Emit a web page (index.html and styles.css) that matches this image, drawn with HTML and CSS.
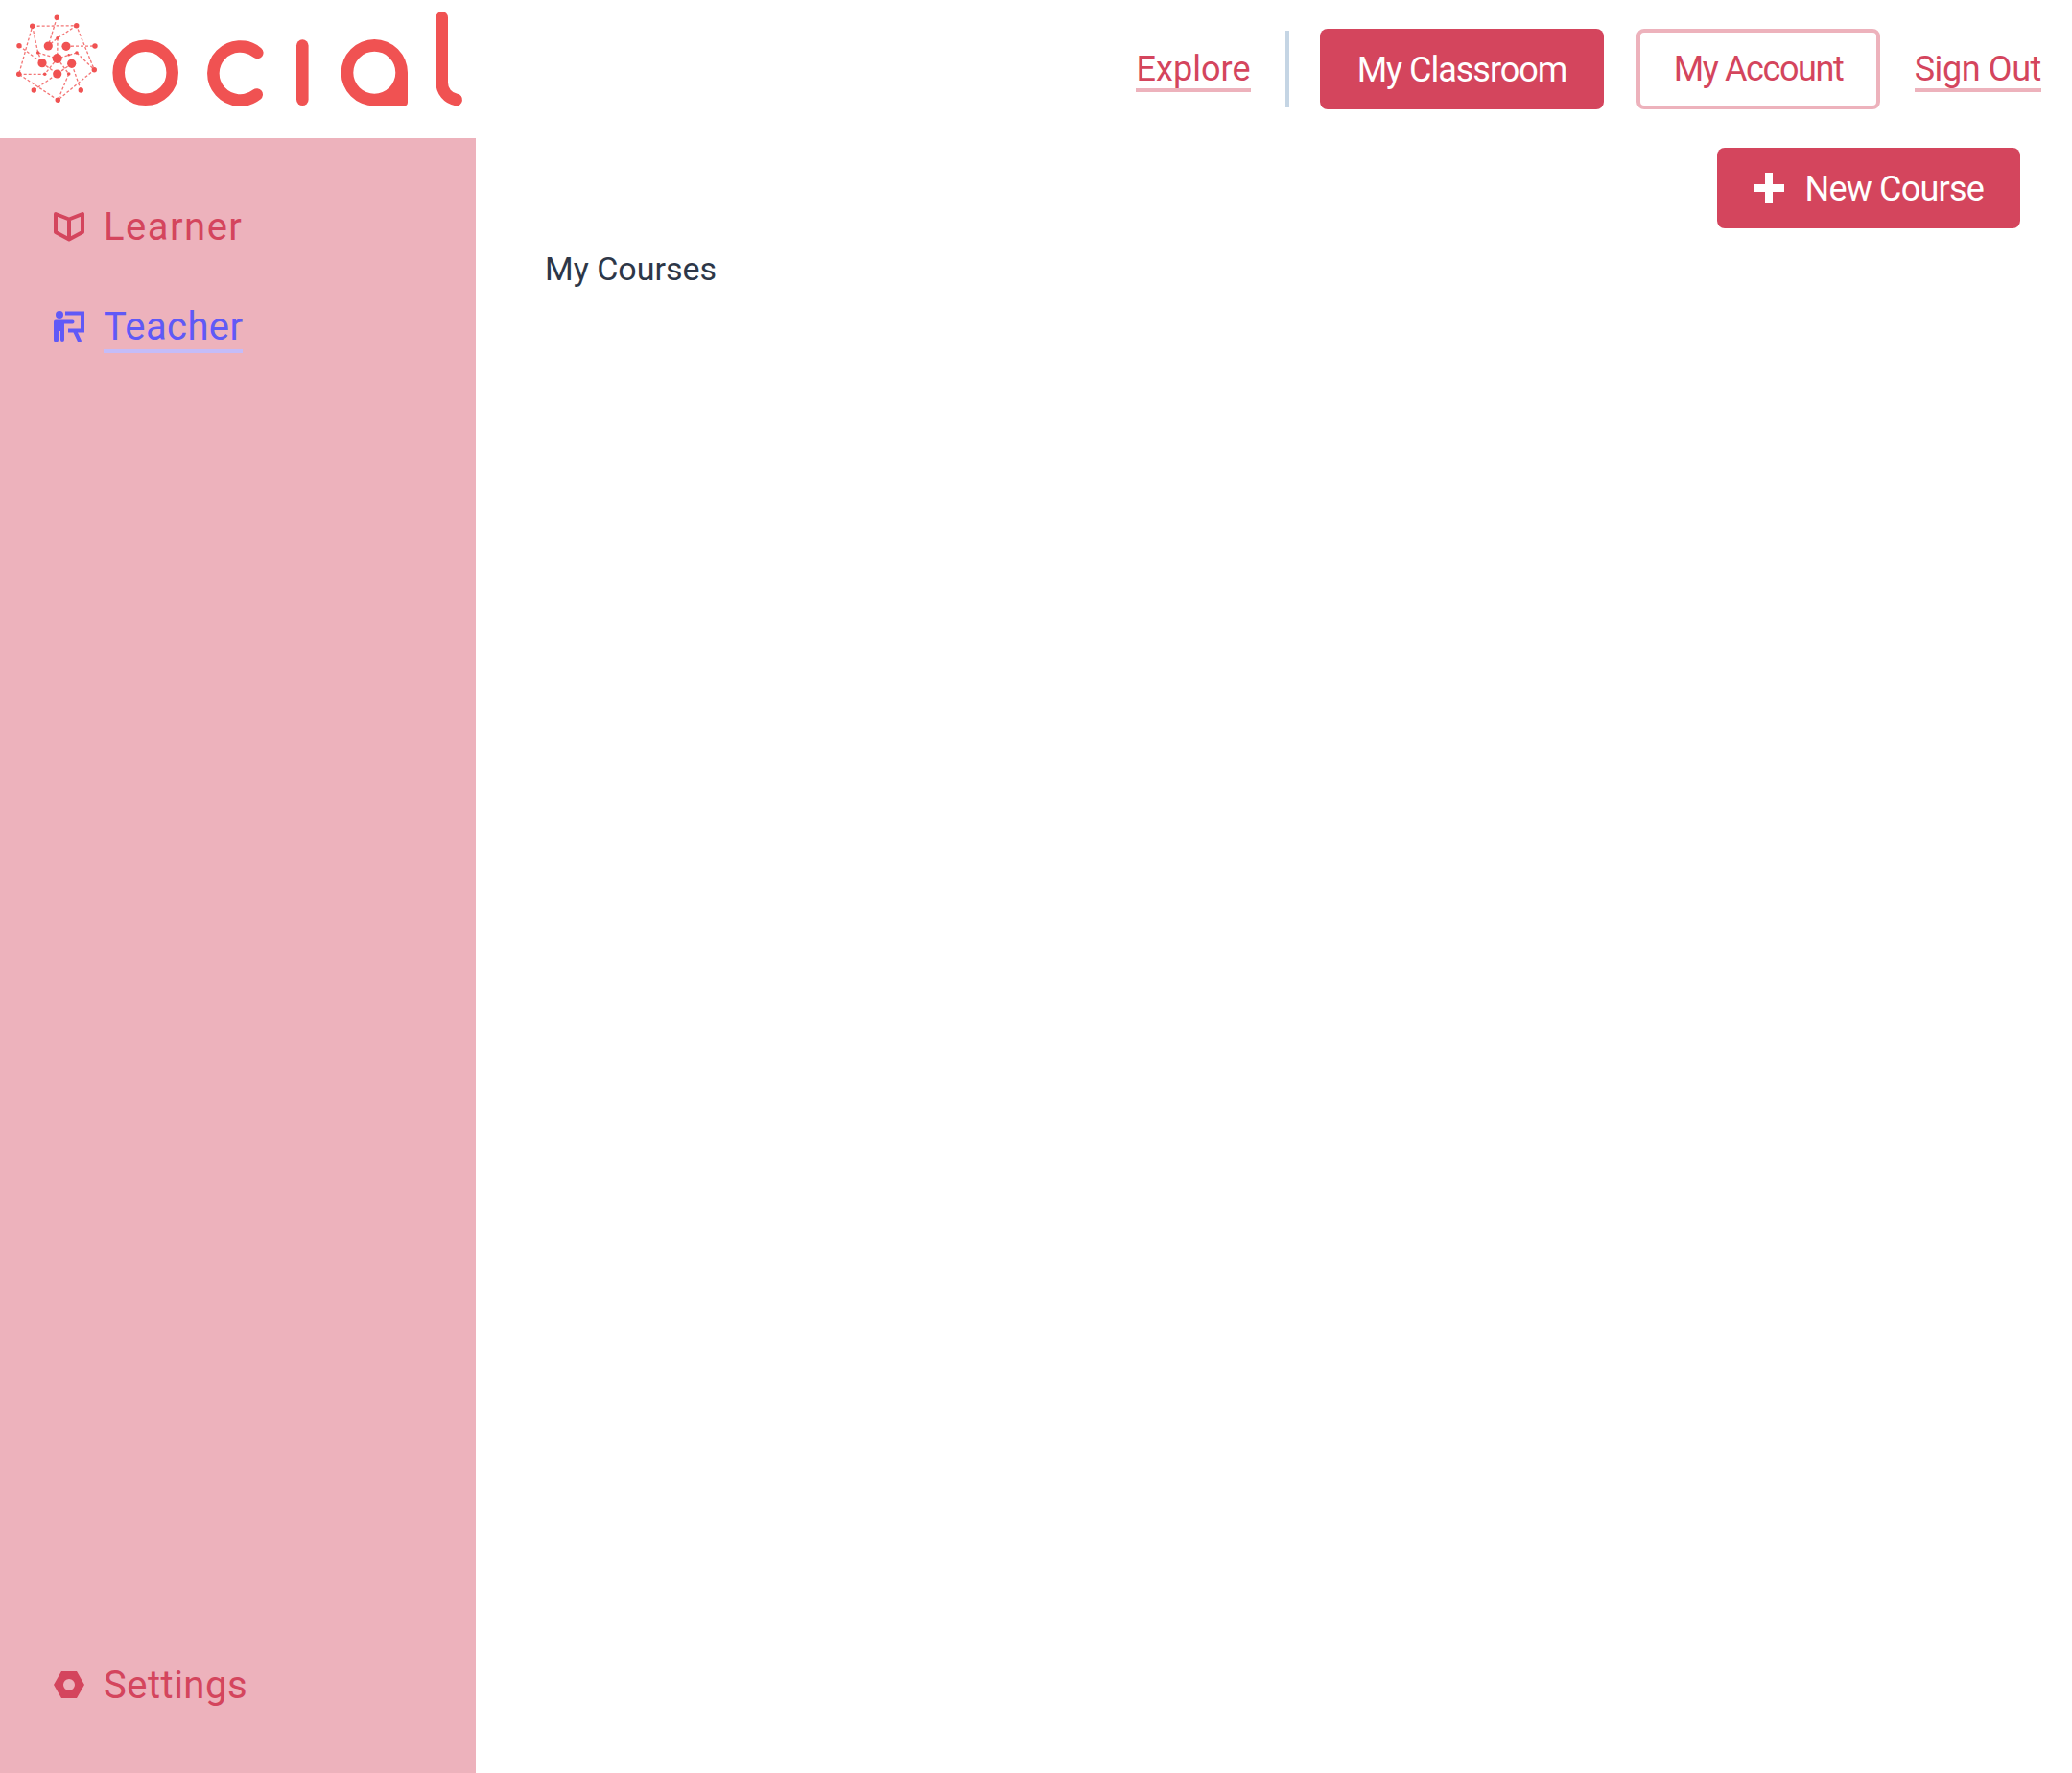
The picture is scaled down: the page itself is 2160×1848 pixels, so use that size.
FILE: index.html
```html
<!DOCTYPE html>
<html lang="en">
<head>
<meta charset="utf-8">
<title>My Classroom</title>
<link rel="stylesheet" href="styles.css">
</head>
<body>
<header class="topbar">
  <a class="logo" href="#" aria-label="Social">
    <svg class="logo-svg" viewBox="0 0 490 144" width="490" height="144" aria-hidden="true">
      <g class="logo-net">
        <path d="M33.7 27.300L79.700 26.700L98.300 72.700L60.300 104.300L19.700 77.300Z"/>
        <path d="M59.300 18.300L50.300 48M79.700 26.700L60 39.700L50.300 48M20 47.700L44 65.700M33.700 27.300L39.700 55L44 65.700M69 48.300L99 48M80 55L98.300 72.700M80 55L59.700 61M19.700 77.300L46.700 77.300L59.700 61M35.300 94L59.700 77M71.700 77L60.300 104.300M84.300 94L74.700 66.300M60 39.700L59.700 61M39.700 55L59.700 61M59.700 61L71.700 77M44 65.700L59.700 77M74.700 66.300L59.700 77"/>
      </g>
      <g class="logo-dots">
        <circle cx="59.300" cy="18.300" r="2.700"/><circle cx="33.700" cy="27.300" r="2.700"/><circle cx="79.700" cy="26.700" r="2.700"/>
        <circle cx="20" cy="47.700" r="2.700"/><circle cx="99" cy="48" r="2.700"/><circle cx="98.300" cy="72.700" r="2.700"/>
        <circle cx="19.700" cy="77.300" r="2.700"/><circle cx="35.300" cy="94" r="2.700"/><circle cx="84.300" cy="94" r="2.700"/>
        <circle cx="60.300" cy="104.300" r="2.700"/>
        <circle cx="60" cy="39.700" r="1.800"/><circle cx="39.700" cy="55" r="1.800"/><circle cx="80" cy="55" r="1.800"/>
        <circle cx="46.700" cy="77.300" r="1.800"/><circle cx="71.700" cy="77" r="1.800"/><circle cx="71.700" cy="57.300" r="1.200"/>
        <circle cx="50.300" cy="48" r="4.600"/><circle cx="69" cy="48.300" r="4.600"/><circle cx="59.700" cy="61" r="5"/>
        <circle cx="44" cy="65.700" r="4.600"/><circle cx="74.700" cy="66.300" r="4.600"/><circle cx="59.700" cy="77" r="4.600"/>
      </g>
      <g class="logo-word">
        <circle cx="151.700" cy="75.700" r="28"/>
        <path d="M268.300 55A28 28 0 1 0 267.700 98.500"/>
        <path d="M315.300 47.600V103.700"/>
        <path d="M460.700 18.300V86A18 18 0 0 0 475.700 104"/>
      </g>
      <path class="logo-a" fill-rule="evenodd" d="M425 75.700A34.700 34.700 0 1 0 390.300 110.400H421A4 4 0 0 0 425 106.400ZM412.300 75.700A22 22 0 1 1 368.300 75.700A22 22 0 1 1 412.300 75.700Z"/>
    </svg>
  </a>
  <nav class="topnav">
    <a class="link link-explore" href="#">Explore</a>
    <span class="divider"></span>
    <a class="btn btn-solid btn-classroom" href="#">My Classroom</a>
    <a class="btn btn-outline" href="#">My Account</a>
    <a class="link link-signout" href="#">Sign Out</a>
  </nav>
</header>
<div class="layout">
  <aside class="sidebar">
    <ul class="side-list">
      <li class="side-item">
        <svg class="side-icon" viewBox="0 0 32 32" aria-hidden="true"><path class="book" d="M2 3L16 8.500L30 3V22L16 29.500L2 22ZM16 8.500V29.500"/></svg>
        <a class="side-link side-link-learner" href="#">Learner</a>
      </li>
      <li class="side-item side-item-active">
        <svg class="side-icon" viewBox="0 0 32 32" aria-hidden="true"><circle class="fill" cx="6" cy="4" r="4"/><path class="fill" d="M2 9.500H19.500A2 2 0 0 1 19.500 13.500H11V30A1.700 1.700 0 0 1 7 30V21H5V30A1.700 1.700 0 0 1 0 30V11.500A2 2 0 0 1 2 9.500Z"/><path class="fill" d="M12 0.500H32V22.500H25L28.500 30A1.600 1.600 0 0 1 25 32L20.500 22.500H15V18.500H28V4.500H12Z"/></svg>
        <a class="side-link" href="#">Teacher</a>
      </li>
    </ul>
    <div class="side-item">
      <svg class="side-icon side-hex" viewBox="0 0 32 28" aria-hidden="true"><path class="fill" fill-rule="evenodd" d="M0 14L8 0H24L32 14L24 28H8ZM22 14A6 6 0 1 0 10 14A6 6 0 1 0 22 14Z"/></svg>
      <a class="side-link side-link-settings" href="#">Settings</a>
    </div>
  </aside>
  <main class="content">
    <div class="actions">
      <a class="btn btn-solid btn-new" href="#">
        <svg class="plus" viewBox="0 0 32 32" aria-hidden="true"><path d="M12 0H20V12H32V20H20V32H12V20H0V12H12Z"/></svg>
        New Course
      </a>
    </div>
    <p class="heading">My Courses</p>
  </main>
</div>
</body>
</html>
```
FILE: styles.css
```css
* { box-sizing: border-box; }
html, body { margin: 0; height: 100%; }
body {
  background: #fff;
  color: #2d3748;
  font-family: Roboto, "Noto Sans", sans-serif;
  display: flex;
  flex-direction: column;
  min-height: 1848px;
}
a { text-decoration: none; color: #d4455d; }

.topbar {
  height: 144px;
  display: flex;
  align-items: flex-start;
  justify-content: space-between;
  flex: none;
}
.logo { display: block; height: 144px; }
.logo-svg { display: block; }
.logo-net path { fill: none; stroke: #f05252; stroke-width: 1.3; stroke-dasharray: 3 2; opacity: .8; }
.logo-dots circle { fill: #f05252; }
.logo-word circle, .logo-word path { fill: none; stroke: #f05252; stroke-width: 12.600; stroke-linecap: round; }
.logo-a { fill: #f05252; }

.topnav {
  display: flex;
  align-items: flex-start;
  padding: 30px 32px 0 0;
  font-size: 36px;
}
.link {
  display: block;
  margin-top: 14px;
  height: 52px;
  padding-top: 8px;
  line-height: 40px;
  border-bottom: 4px solid #edb2bc;
}
.link-explore { letter-spacing: .05px; }
.link-signout { letter-spacing: -.4px; }
.divider {
  width: 4px;
  height: 80px;
  margin: 2px 32px 0 36px;
  background: #c5d5e4;
}
.btn {
  display: flex;
  align-items: center;
  height: 84px;
  padding: 2px 39px 0;
  border-radius: 8px;
  font-size: 36px;
}
.btn-solid { background: #d4455d; color: #fff; }
.btn-classroom { letter-spacing: -1px; }
.btn-outline {
  background: #fff;
  border: 4px solid #edb2bc;
  padding: 0 34.300px;
  margin: 0 36px 0 34px;
  letter-spacing: -1.400px;
}

.layout { flex: 1; display: flex; min-height: 0; }
.sidebar {
  width: 496px;
  flex: none;
  background: #edb2bc;
  padding: 64px 56px;
  display: flex;
  flex-direction: column;
  justify-content: space-between;
}
.side-list { list-style: none; margin: 0; padding: 0; display: flex; flex-direction: column; gap: 48px; }
.side-item { display: flex; align-items: center; gap: 20px; height: 56px; font-size: 40px; }
.side-icon { width: 32px; height: 32px; flex: none; }
.side-hex { height: 28px; }
.book { fill: none; stroke: #d4455d; stroke-width: 4; stroke-linejoin: round; }
.fill { fill: #d4455d; }
.side-link { padding-top: 2px; line-height: 46px; display: block; }
.side-link-learner { letter-spacing: 1.500px; }
.side-link-settings { letter-spacing: .5px; }
.side-item-active .fill { fill: #6059f7; }
.side-item-active .side-link { color: #6059f7; letter-spacing: .4px; box-shadow: 0 4px 0 #c4bcf9; }

.content { flex: 1; padding: 10px 54px 0 72px; }
.actions { display: flex; justify-content: flex-end; }
.btn-new { gap: 22px; padding: 2px 38px 0; letter-spacing: -.8px; }
.plus { width: 32px; height: 32px; fill: #fff; flex: none; margin-top: -2px; }
.heading { margin: 18px 0 0; font-size: 34px; line-height: 48px; }
```
